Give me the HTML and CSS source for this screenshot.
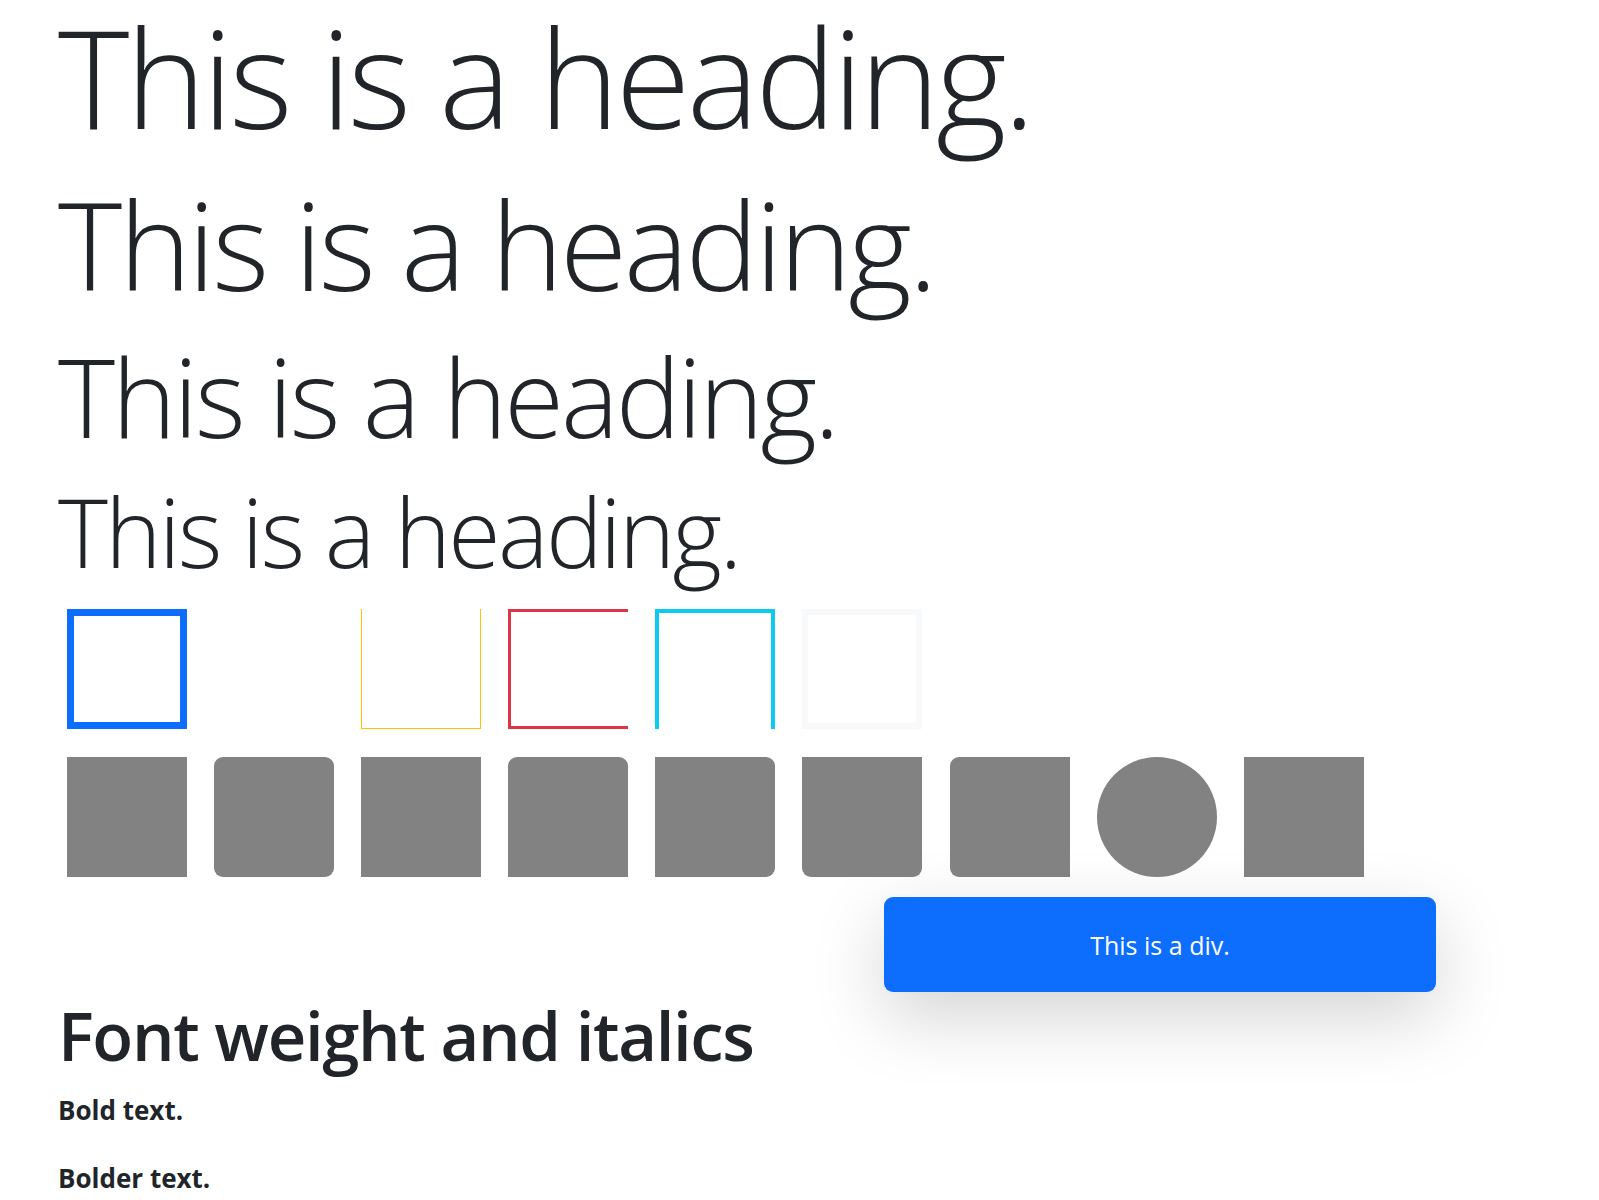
FILE: index.html
```html
<!DOCTYPE html>
<html lang="en">
<head>
<meta charset="utf-8">
<title>Utilities</title>
<link rel="stylesheet" href="styles.css">
</head>
<body>
<main class="page">
  <h1 class="display display-1">This is a heading.</h1>
  <h1 class="display display-2">This is a heading.</h1>
  <h1 class="display display-3">This is a heading.</h1>
  <h1 class="display display-4">This is a heading.</h1>

  <div class="box-row borders">
    <span class="box b-primary"></span>
    <span class="box b-none"></span>
    <span class="box b-warning"></span>
    <span class="box b-danger"></span>
    <span class="box b-info"></span>
    <span class="box b-light"></span>
  </div>

  <div class="box-row fills">
    <span class="box fill"></span>
    <span class="box fill r-all"></span>
    <span class="box fill"></span>
    <span class="box fill r-top"></span>
    <span class="box fill r-end"></span>
    <span class="box fill r-bottom"></span>
    <span class="box fill r-start"></span>
    <span class="box fill r-circle"></span>
    <span class="box fill"></span>
  </div>

  <div class="shadow-div">This is a div.</div>

  <h2 class="section-title">Font weight and italics</h2>
  <p class="fw-bold">Bold text.</p>
  <p class="fw-bolder">Bolder text.</p>
</main>
</body>
</html>
```

FILE: styles.css
```css
* { box-sizing: border-box; }

html, body {
  margin: 0;
  padding: 0;
  background: #fff;
}

body {
  font-family: "Open Sans", "Noto Sans", "DejaVu Sans", sans-serif;
  color: #212529;
}

.page {
  padding-left: 58px;
  overflow: hidden;
}

.display {
  font-weight: 300;
  line-height: 1.2;
  margin: 0 0 12.7px 0;
  letter-spacing: -0.027em;
  white-space: nowrap;
}

.display-1 {
  font-size: 136px;
  line-height: 153.4px;
  margin-bottom: 17.6px;
}
.display-2 { font-size: 122.4px; }
.display-3 { font-size: 108.8px; }
.display-4 { font-size: 95.2px; }

.box-row {
  display: flex;
  gap: 27.1px;
  padding-left: 9px;
}

.borders { margin-top: 21.3px; }
.fills { margin-top: 28px; }

.box {
  display: block;
  width: 120px;
  height: 120px;
  flex: none;
}

.b-primary { border: 7px solid #0d6efd; }
.b-none { border: 0; }
.b-warning { border: 1.5px solid #ffc107; border-top: 0; }
.b-danger { border: 3px solid #dc3545; border-right: 0; }
.b-info { border: 4px solid #0dcaf0; border-bottom: 0; }
.b-light { border: 6px solid #f8f9fa; }

.fill { background: #828282; }
.r-all { border-radius: 9px; }
.r-top { border-radius: 9px 9px 0 0; }
.r-end { border-radius: 0 9px 9px 0; }
.r-bottom { border-radius: 0 0 9px 9px; }
.r-start { border-radius: 9px 0 0 9px; }
.r-circle { border-radius: 50%; }

.shadow-div {
  margin: 20px 0 0 826px;
  width: 552px;
  padding: 29.5px 0;
  line-height: 36px;
  font-size: 25px;
  text-align: center;
  color: #fff;
  background: #0d6efd;
  border-radius: 9px;
  box-shadow: 0 24px 72px rgba(0, 0, 0, 0.175);
}

.section-title {
  font-size: 67px;
  font-weight: 600;
  letter-spacing: -0.02em;
  line-height: 1.2;
  margin: 3px 0 14px 0;
}

.fw-bold, .fw-bolder {
  font-size: 26px;
  line-height: 40px;
  margin: 0 0 28px 0;
  font-weight: 700;
}
```
